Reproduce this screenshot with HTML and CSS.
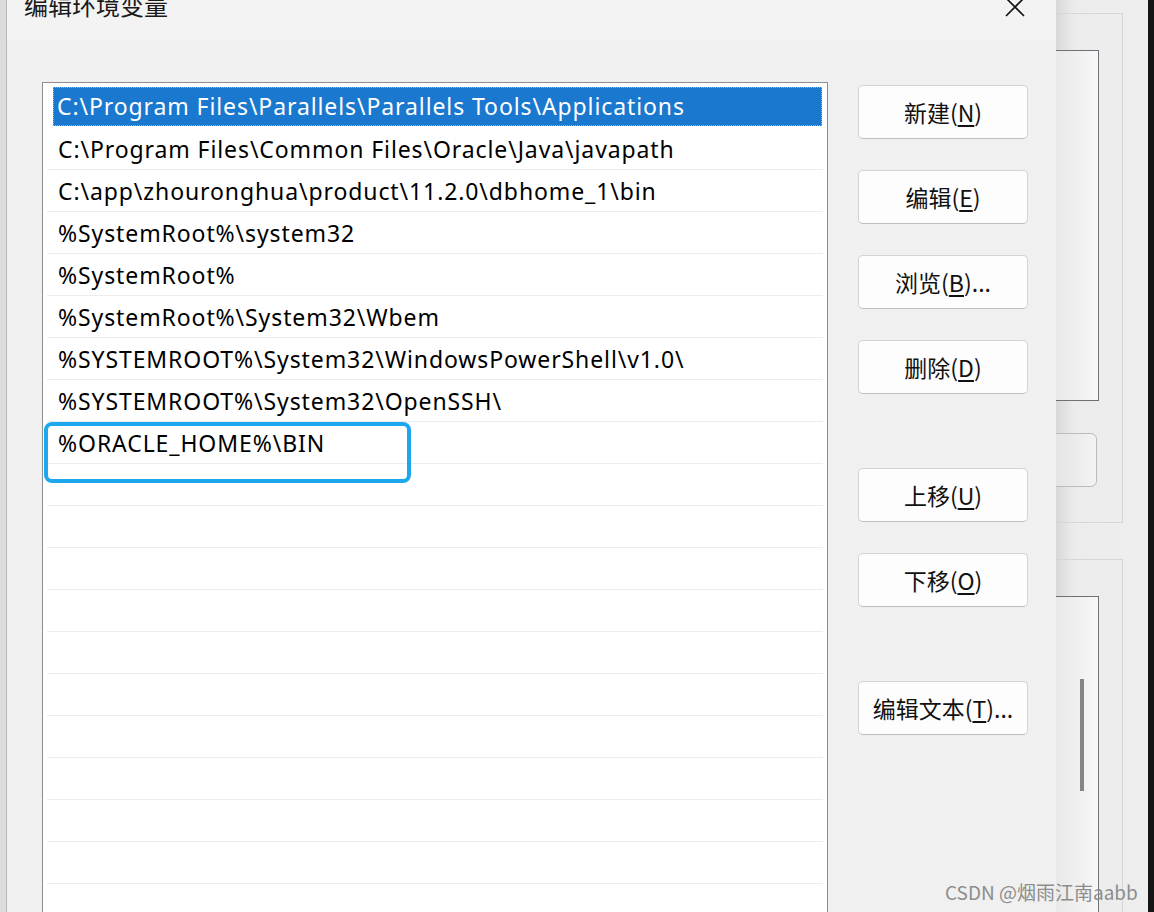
FILE: index.html
```html
<!DOCTYPE html>
<html lang="zh-CN">
  <head>
    <meta charset="UTF-8" />
    <meta name="viewport" content="width=device-width, initial-scale=1.0" />
    <title>编辑环境变量</title>
    <link rel="stylesheet" href="styles.css">
  </head>
  <body>
    <div class="screen">
      <div class="behind-left"></div>

      <div class="dialog">
        <div class="titlebar">
          <span class="title">编辑环境变量</span>
          <span class="close">
            <svg width="22" height="22" viewBox="0 0 22 22">
              <path d="M2 2 L20 20 M20 2 L2 20" stroke="#111" stroke-width="1.6" fill="none" />
            </svg>
          </span>
        </div>

        <div class="content">
          <div class="pathlist">
            <div class="row selected"><span class="item">C:\Program Files\Parallels\Parallels Tools\Applications</span></div>
            <div class="row"><span class="item">C:\Program Files\Common Files\Oracle\Java\javapath</span></div>
            <div class="row"><span class="item">C:\app\zhouronghua\product\11.2.0\dbhome_1\bin</span></div>
            <div class="row"><span class="item">%SystemRoot%\system32</span></div>
            <div class="row"><span class="item">%SystemRoot%</span></div>
            <div class="row"><span class="item">%SystemRoot%\System32\Wbem</span></div>
            <div class="row"><span class="item">%SYSTEMROOT%\System32\WindowsPowerShell\v1.0\</span></div>
            <div class="row"><span class="item">%SYSTEMROOT%\System32\OpenSSH\</span></div>
            <div class="row"><span class="item">%ORACLE_HOME%\BIN</span></div>
            <div class="row"></div>
            <div class="row"></div>
            <div class="row"></div>
            <div class="row"></div>
            <div class="row"></div>
            <div class="row"></div>
            <div class="row"></div>
            <div class="row"></div>
            <div class="row"></div>
            <div class="row"></div>
            <div class="row"></div>
          </div>

          <div class="actions">
            <button>新建(<u>N</u>)</button>
            <button>编辑(<u>E</u>)</button>
            <button>浏览(<u>B</u>)...</button>
            <button>删除(<u>D</u>)</button>
            <button class="group-start">上移(<u>U</u>)</button>
            <button>下移(<u>O</u>)</button>
            <button class="group-start">编辑文本(<u>T</u>)...</button>
          </div>
        </div>
      </div>

      <div class="behind-right">
        <div class="groupbox first">
          <div class="pane"></div>
          <div class="field"></div>
        </div>
        <div class="groupbox second">
          <div class="pane list">
            <div class="thumb"></div>
          </div>
        </div>
      </div>
      <div class="edge"></div>
    </div>

    <div class="annotation"></div>
    <div class="watermark">CSDN @烟雨江南aabb</div>
  </body>
</html>
```

FILE: styles.css
```css
body {
  margin: 0;
  padding: 0;
  width: 1154px;
  height: 912px;
  overflow: hidden;
  position: relative;
  font-family: "Noto Sans", "Noto Sans CJK SC", sans-serif;
  background-color: #f0f0f0;
  color: #000;
}

.screen {
  display: flex;
  height: 912px;
  overflow: hidden;
}

.behind-left {
  width: 6px;
  background-color: #dcdcdc;
  border-right: 1px solid #b9b9b9;
}

.dialog {
  width: 1049px;
  background-color: #f0f0f0;
}

.titlebar {
  height: 40px;
  background-color: #f3f3f3;
  display: flex;
  justify-content: space-between;
  align-items: flex-start;
}

.title {
  font-family: "Noto Sans CJK SC", sans-serif;
  font-size: 24px;
  line-height: 24px;
  margin-top: -7px;
  margin-left: 17px;
  color: #1a1a1a;
}

.close {
  margin-top: -4px;
  margin-right: 30px;
}

.content {
  display: flex;
  padding-top: 42px;
  padding-left: 35px;
}

.pathlist {
  width: 776px;
  height: 840px;
  border: 1px solid #8c8e92;
  border-bottom: none;
  background-color: #fff;
  padding: 3px 4px 0 4px;
  flex-shrink: 0;
  overflow: hidden;
}

.row {
  height: 41px;
  border-bottom: 1px solid #ececec;
  display: flex;
  align-items: center;
}

.item {
  font-size: 23px;
  letter-spacing: 0.9px;
  padding-left: 11px;
  white-space: nowrap;
}

.row.selected {
  border-bottom-color: #fff;
}

.row.selected .item {
  background-color: #1a78cf;
  color: #fff;
  margin-left: 6px;
  padding-left: 4px;
  height: 39px;
  line-height: 39px;
  width: 765px;
  outline: 1px dotted #e3a460;
  outline-offset: -1px;
}

.actions {
  display: flex;
  flex-direction: column;
  gap: 31px;
  margin-left: 30px;
  margin-top: 3px;
}

.actions button {
  width: 170px;
  height: 54px;
  background-color: #fdfdfd;
  border: 1px solid #d3d3d3;
  border-bottom-color: #bdbdbd;
  border-radius: 5px;
  font-family: "Noto Sans CJK SC", sans-serif;
  font-size: 23px;
  color: #111;
  padding: 0;
}

.actions button u {
  text-underline-offset: 3px;
}

.actions .group-start {
  margin-top: 43px;
}

.behind-right {
  width: 92px;
  overflow: hidden;
  padding-top: 13px;
  background: linear-gradient(to right, #d8d8d8, #ececec 18px, #eeeeee);
}

.groupbox {
  margin-left: -20px;
  margin-right: 25px;
  border: 1px solid #d6d6d6;
  padding-top: 36px;
}

.groupbox.first {
  height: 472px;
}

.groupbox.second {
  margin-top: 36px;
  height: 320px;
}

.pane {
  margin-right: 23px;
  height: 349px;
  border: 1px solid #6d7077;
  background: linear-gradient(to right, #e2e2e2, #f7f7f7);
}

.field {
  margin-top: 32px;
  margin-right: 25px;
  height: 52px;
  border: 1px solid #bcbcbc;
  border-radius: 6px;
  background: linear-gradient(to right, #dedede, #f3f3f3);
}

.pane.list {
  height: 320px;
  display: flex;
  justify-content: flex-end;
}

.thumb {
  width: 4px;
  height: 112px;
  background-color: #858585;
  margin-top: 82px;
  margin-right: 14px;
}

.edge {
  width: 6px;
  background-color: #151515;
}

.annotation {
  position: absolute;
  left: 44px;
  top: 422px;
  width: 359px;
  height: 53px;
  border: 4px solid #1ca7ef;
  border-radius: 8px;
}

.watermark {
  position: absolute;
  left: 945px;
  top: 878px;
  font-family: "Noto Sans CJK SC", sans-serif;
  font-size: 19px;
  color: #8d8d8d;
  white-space: nowrap;
}
```
